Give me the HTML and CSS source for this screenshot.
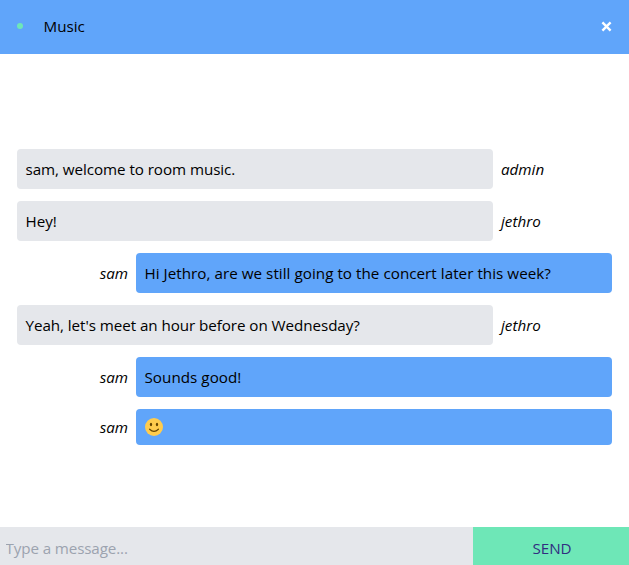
FILE: index.html
```html
<!DOCTYPE html>
<html lang="en">
<head>
<meta charset="utf-8">
<title>Music</title>
<link rel="stylesheet" href="styles.css">
</head>
<body>
<div class="chat">
  <header class="bar">
    <span class="online"></span>
    <h1 class="room">Music</h1>
    <svg class="close" width="11" height="11" viewBox="0 0 11 11"><path d="M1.4 1.4 9.6 9.6M9.6 1.4 1.4 9.6"/></svg>
  </header>
  <main class="messages">
    <div class="row"><p class="bubble welcome">sam, welcome to room music.</p><em class="name">admin</em></div>
    <div class="row"><p class="bubble">Hey!</p><em class="name">jethro</em></div>
    <div class="row own"><em class="name">sam</em><p class="bubble">Hi Jethro, are we still going to the concert later this week?</p></div>
    <div class="row"><p class="bubble question">Yeah, let's meet an hour before on Wednesday?</p><em class="name">jethro</em></div>
    <div class="row own"><em class="name">sam</em><p class="bubble">Sounds good!</p></div>
    <div class="row own"><em class="name">sam</em><div class="bubble emoji">
      <svg width="20" height="20" viewBox="0 0 20 20"><circle cx="10" cy="10" r="9" fill="#ffcc4d"/><ellipse cx="7" cy="7.5" rx="1.15" ry="1.8" fill="#664500"/><ellipse cx="13" cy="7.5" rx="1.15" ry="1.8" fill="#664500"/><path d="M5.6 12.2Q10 16.5 14.4 12.2" fill="none" stroke="#664500" stroke-width="1.2" stroke-linecap="round"/></svg>
    </div></div>
  </main>
  <form class="composer">
    <input class="field" type="text" placeholder="Type a message..." aria-label="Message">
    <button class="send" type="button">SEND</button>
  </form>
</div>
</body>
</html>
```
FILE: styles.css
```css
* { box-sizing: border-box; margin: 0; padding: 0; }
body, input, button { font: 15.2px/24px "Open Sans", "Noto Sans", sans-serif; }
body { color: #000; background: #fff; }
.chat { height: 565px; display: flex; flex-direction: column; overflow: hidden; }
.bar { height: 54px; flex: none; display: flex; align-items: center; padding: 0 17px; background: #60a5fa; }
.online { width: 6px; height: 6px; border-radius: 50%; background: #6ee7b7; margin-right: 20.5px; margin-bottom: 2px; }
.room { font-size: inherit; font-weight: 400; margin-bottom: 2px; }
.close { margin-left: auto; margin-bottom: 2px; fill: none; stroke: #fff; stroke-width: 2.4; }
.messages { flex: 1; display: flex; flex-direction: column; gap: 12px; padding: 95px 17px 0; }
.row { display: flex; align-items: center; gap: 8px; }
.own { justify-content: flex-end; }
.bubble { width: 476px; height: 40px; padding: 8px 8px 8px 8.5px; border-radius: 4px; background: #e5e7eb; white-space: nowrap; }
.own .bubble { background: #60a5fa; letter-spacing: 0.04px; }
.welcome, .question { letter-spacing: -0.06px; }
.own .emoji { height: 36px; padding-left: 8px; }
.emoji svg { display: block; }
.composer { height: 38px; flex: none; display: flex; }
.field { width: 473px; border: 0; outline: 0; border-radius: 0; padding: 3px 5.5px 0; background: #e5e7eb; letter-spacing: -0.12px; }
.field::placeholder { color: #9ca3af; opacity: 1; }
.send { flex: 1; border: 0; padding: 3px 0 0 2px; background: #6ee7b7; color: #312e81; }
```
